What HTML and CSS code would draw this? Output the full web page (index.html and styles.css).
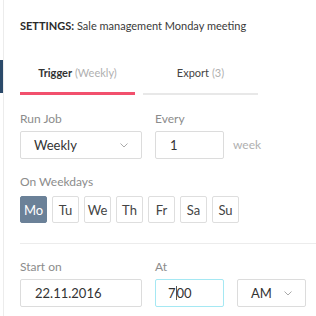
FILE: index.html
```html
<!DOCTYPE html>
<html>
<head>
<meta charset="utf-8">
<link rel="stylesheet" href="styles.css">
</head>
<body>
<div class="panel">
  <span class="active-marker"></span>
  <h1 class="title"><b>SETTINGS:</b> Sale management Monday meeting</h1>
  <div class="tabs">
    <div class="tab tab-active"><span class="tab-name">Trigger</span> <span class="tab-meta">(Weekly)</span></div>
    <div class="tab"><span class="tab-name-plain">Export</span> <span class="tab-meta">(3)</span></div>
  </div>

  <div class="row first-row">
    <div class="field wide">
      <label class="label">Run Job</label>
      <div class="control select">
        <span>Weekly</span>
        <svg class="chev" width="8" height="5" viewBox="0 0 8 5"><polyline points="0.5,0.5 4,4 7.5,0.5" fill="none" stroke="#aaa" stroke-width="1"/></svg>
      </div>
    </div>
    <div class="field narrow">
      <label class="label">Every</label>
      <div class="control input-num"><span>1</span></div>
    </div>
    <span class="unit">week</span>
  </div>

  <label class="label weekdays-label">On Weekdays</label>
  <div class="weekdays">
    <span class="day day-on">Mo</span>
    <span class="day">Tu</span>
    <span class="day">We</span>
    <span class="day">Th</span>
    <span class="day">Fr</span>
    <span class="day">Sa</span>
    <span class="day">Su</span>
  </div>

  <hr class="divider">

  <div class="row">
    <div class="field wide">
      <label class="label">Start on</label>
      <div class="control date"><span>22.11.2016</span></div>
    </div>
    <div class="field narrow">
      <label class="label">At</label>
      <div class="control time focus"><span>7</span><span class="caret"></span><span>00</span></div>
    </div>
    <div class="field narrow ampm">
      <div class="control select">
        <span>AM</span>
        <svg class="chev" width="8" height="5" viewBox="0 0 8 5"><polyline points="0.5,0.5 4,4 7.5,0.5" fill="none" stroke="#aaa" stroke-width="1"/></svg>
      </div>
    </div>
  </div>
</div>
</body>
</html>
```

FILE: styles.css
```css
html, body {
  margin: 0;
  padding: 0;
  background: #fff;
}
body {
  font-family: Lato, "Noto Sans", sans-serif;
  color: #333;
  width: 316px;
  height: 316px;
  overflow: hidden;
}
.panel {
  position: relative;
  margin-left: 3px;
  border-left: 1px solid #ececec;
  padding-left: 16px;
  height: 316px;
  box-sizing: border-box;
}
.active-marker {
  position: absolute;
  left: -4px;
  top: 60px;
  width: 3px;
  height: 33px;
  background: #2b4a6a;
}
.title {
  margin: 0;
  padding-top: 18px;
  font-size: 11px;
  line-height: 16px;
  font-weight: normal;
  color: #3a3a3a;
}
.title b {
  font-weight: bold;
  color: #2a2a2a;
}
.tabs {
  display: flex;
  gap: 8px;
  margin-top: 31px;
  align-items: flex-end;
}
.tab {
  width: 115px;
  text-align: center;
  font-size: 11px;
  line-height: 16px;
  padding-bottom: 12px;
  border-bottom: 2px solid #e8e8e8;
}
.tab-active {
  padding-bottom: 11px;
  border-bottom: 3px solid #f2506d;
}
.tab-name {
  font-weight: bold;
  color: #333;
}
.tab-name-plain {
  color: #444;
}
.tab-meta {
  color: #b0b0b0;
}
.row {
  display: flex;
  align-items: flex-end;
  gap: 13px;
}
.first-row {
  margin-top: 16px;
}
.field {
  display: flex;
  flex-direction: column;
}
.wide {
  width: 122px;
}
.narrow {
  width: 69px;
}
.label {
  display: block;
  font-size: 12px;
  line-height: 16px;
  color: #8c8c8c;
  margin-bottom: 4px;
}
.control {
  box-sizing: border-box;
  height: 28px;
  border: 1px solid #dcdcdc;
  border-radius: 2px;
  display: flex;
  align-items: center;
  font-size: 13px;
  color: #333;
  background: #fff;
}
.select {
  justify-content: space-between;
  padding: 0 13px 0 13px;
}
.chev {
  display: block;
  margin-top: 1px;
}
.input-num {
  padding-left: 14px;
}
.date {
  padding-left: 14px;
}
.time {
  padding-left: 12px;
}
.focus {
  border-color: #a5e8f3;
}
.caret {
  display: inline-block;
  width: 1px;
  height: 14px;
  background: #555;
}
.unit {
  font-size: 12px;
  color: #b0b0b0;
  line-height: 28px;
  margin-left: -4px;
}
.weekdays-label {
  margin-top: 15px;
  margin-bottom: 6px;
}
.weekdays {
  display: flex;
  gap: 5px;
}
.day {
  box-sizing: border-box;
  width: 27px;
  height: 27px;
  border: 1px solid #dedede;
  border-radius: 2px;
  display: flex;
  align-items: center;
  justify-content: center;
  font-size: 13px;
  color: #444;
  background: #fff;
}
.day-on {
  background: #6b8198;
  border-color: #6b8198;
  color: #fff;
}
.divider {
  margin: 20px 0 15px 0;
  border: 0;
  border-top: 1px solid #ececec;
  height: 0;
}
.ampm {
  margin-left: 0;
}
```
